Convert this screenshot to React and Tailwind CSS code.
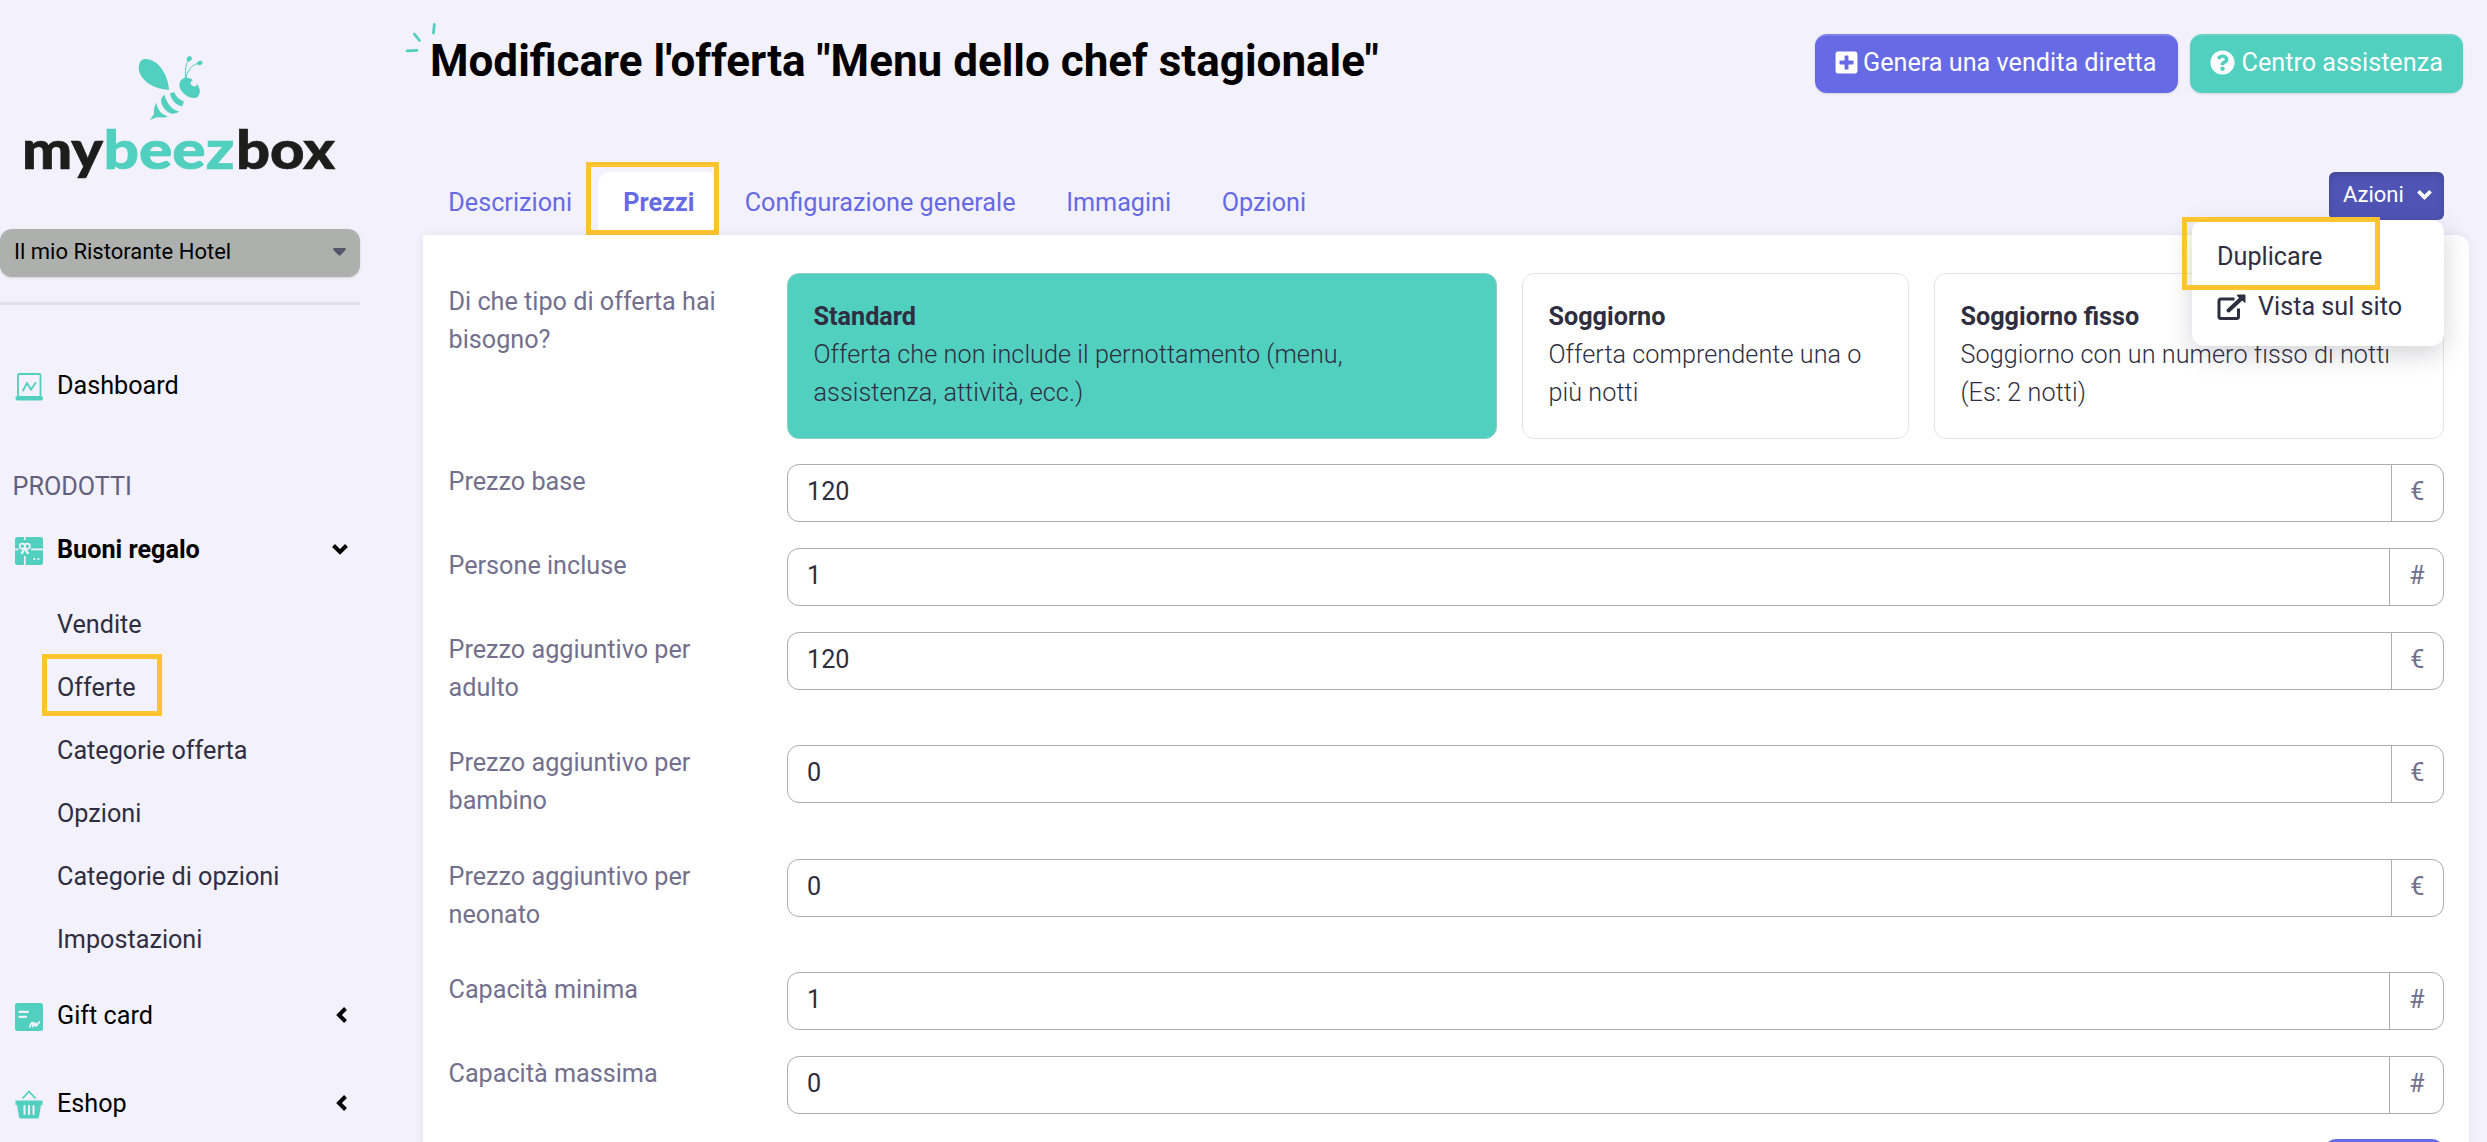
import React from 'react'
import { FaPlusSquare, FaQuestionCircle } from 'react-icons/fa'

const tabs = ['Descrizioni', 'Prezzi', 'Configurazione generale', 'Immagini', 'Opzioni']

const giftLinks = ['Vendite', 'Offerte', 'Categorie offerta', 'Opzioni', 'Categorie di opzioni', 'Impostazioni']

const offerTypes = [
  { title: 'Standard', text: 'Offerta che non include il pernottamento (menu, assistenza, attività, ecc.)', style: 'w-[710px] pr-20 bg-[#51cfbf] border-[#8fcfca]' },
  { title: 'Soggiorno', text: 'Offerta comprendente una o più notti', style: 'w-[387px] pr-6 bg-white border-[#e4e3ed]' },
  { title: 'Soggiorno fisso', text: 'Soggiorno con un numero fisso di notti (Es: 2 notti)', style: 'w-[510px] pr-6 bg-white border-[#e4e3ed]' },
]

const fields = [
  { label: 'Prezzo base', value: '120', unit: '€' },
  { label: 'Persone incluse', value: '1', unit: '#' },
  { label: 'Prezzo aggiuntivo per adulto', value: '120', unit: '€', tall: true },
  { label: 'Prezzo aggiuntivo per bambino', value: '0', unit: '€', tall: true },
  { label: 'Prezzo aggiuntivo per neonato', value: '0', unit: '€', tall: true },
  { label: 'Capacità minima', value: '1', unit: '#' },
  { label: 'Capacità massima', value: '0', unit: '#' },
]

const Logo = () => (
  <svg width="360" height="229" viewBox="0 0 360 229" className="block shrink-0">
    <g fill="#51cfbf">
      <path d="M169 90 C168 76 160 60 145.500 59 C139 59 137.500 67 139.500 72.500 C143 82 154 89 169 90Z" />
      <path d="M184 78 C179 80 178 86 181.500 91 C186 97 194 100 198 96.500 C201 93 200 87.500 197 84 C197 87 192 87.500 190.800 84 C190 82 191.500 80.500 193 80.300 C190 78 187 77 184 78Z" />
      <path d="M170 93.500 L174 92 C176 97 180 100 184 101.500 L182 106.500 C176 105 171 100 170 93.500Z" />
      <path d="M164.500 94.500 C167 104 172 110 179 111.500 C176 114 171 114.500 168 112 C163 108.500 160 102 161.500 98Z" />
      <path d="M156.500 102.500 C157 109 161 114.500 168 116.500 C163 118.500 159 116.500 156 117.500 L150 120 L154 114 C153.500 110 154.500 106 156.500 102.500Z" />
      <ellipse cx="189.300" cy="58.800" rx="2.800" ry="2.300" transform="rotate(-50 189.300 58.800)" />
      <ellipse cx="199.800" cy="63" rx="2.800" ry="2.100" transform="rotate(-15 199.800 63)" />
    </g>
    <path d="M185.500 78 C185 69 186 63 189 59.500 M185.800 78 C188 69 193 64 199 63.300" fill="none" stroke="#51cfbf" strokeWidth="1" />
    <g fontFamily="Lato, sans-serif" fontWeight="900" fontSize="53" fill="#1d1d1b" stroke="#1d1d1b" strokeWidth="0.700">
      <text x="22" y="168.700" textLength="81" lengthAdjust="spacingAndGlyphs">my</text>
      <text x="103.500" y="168.700" textLength="131" lengthAdjust="spacingAndGlyphs" fill="#51cfbf" stroke="#51cfbf">beez</text>
      <text x="236" y="168.700" textLength="99" lengthAdjust="spacingAndGlyphs">box</text>
    </g>
  </svg>
)

const DashboardIcon = () => (
  <svg width="28" height="30" viewBox="0 0 28 30" fill="none" stroke="#51cfbf">
    <rect x="3" y="2" width="22.500" height="23" rx="1.500" strokeWidth="1.800" />
    <path d="M8 18.500 L12 11 L16 17.500 L20.500 11" strokeWidth="1.800" strokeLinecap="round" />
    <path d="M0.500 24.500 H11.500 L12.500 26 H16 L17 24.500 H28 V26.500 Q28 28.500 26 28.500 H2.500 Q0.500 28.500 0.500 26.500Z" fill="#51cfbf" stroke="none" />
  </svg>
)

const VoucherIcon = () => (
  <svg width="28" height="28" viewBox="0 0 28 28">
    <rect width="28" height="28" rx="2.500" fill="#51cfbf" />
    <g fill="none" stroke="#f3f1fb" strokeWidth="1.700">
      <path d="M9.800 0 V3 M9.800 19 V28 M0 12.300 H3.500 M16 12.300 H28" />
      <circle cx="7.300" cy="9.300" r="2.600" />
      <circle cx="12.300" cy="9.300" r="2.600" />
      <path d="M9.800 11 L6.500 17 M9.800 11 L13.200 17" strokeWidth="2.400" />
      <path d="M18.500 22 H20.300 M22.500 22 H24.300" strokeWidth="2" />
    </g>
  </svg>
)

const CardIcon = () => (
  <svg width="28" height="28" viewBox="0 0 28 28">
    <rect width="28" height="28" rx="2.500" fill="#51cfbf" />
    <g fill="none" stroke="#f3f1fb" strokeWidth="2.200" strokeLinecap="round" strokeLinejoin="round">
      <path d="M4.500 8.800 H13 M4.500 13.800 H11" />
      <path d="M15 24 C15.500 20 18 18.500 18.200 20.500 L17.800 23.500 L20.500 20 L21 23 L24.500 19" strokeWidth="1.800" />
    </g>
  </svg>
)

const BasketIcon = () => (
  <svg width="28" height="29" viewBox="0 0 28 29">
    <path d="M7.500 8.500 L14 1.500 L20.500 8.500" fill="none" stroke="#51cfbf" strokeWidth="1.800" />
    <path d="M0.500 10.500 H27.500 V15 H26 L24 27 Q23.800 28.500 22 28.500 H6 Q4.200 28.500 4 27 L2 15 H0.500Z" fill="#51cfbf" />
    <path d="M9.500 16 V24 M14 16 V24 M18.500 16 V24" stroke="#f3f1fb" strokeWidth="2" strokeLinecap="round" />
  </svg>
)

const OpenIcon = () => (
  <svg width="30" height="27" viewBox="0 0 30 27" fill="none" stroke="#2f2e41" strokeWidth="3">
    <path d="M17.500 5 H4 Q2 5 2 7 V22.500 Q2 24.500 4 24.500 H19.500 Q21.500 24.500 21.500 22.500 V14.500" />
    <path d="M11.500 16.500 L25 4" strokeWidth="4" strokeLinecap="round" />
    <path d="M20 1.500 Q20 0.500 21 0.500 H27.500 Q28.500 0.500 28.500 1.500 V8 Q28.500 9.500 27.500 8.500 L20.500 2.500Z" fill="#2f2e41" stroke="none" />
  </svg>
)

const ChevronDown = ({ size }) => (
  <svg width={size} height={size} viewBox="0 0 16 16" fill="none" stroke="currentColor" strokeWidth="4">
    <path d="M1.500 4.500 L8 11 L14.500 4.500" />
  </svg>
)

const ChevronLeft = () => (
  <svg width="16" height="16" viewBox="0 0 16 16" fill="none" stroke="currentColor" strokeWidth="4">
    <path d="M13.500 1.500 L7 8 L13.500 14.500" />
  </svg>
)

const MenuItem = ({ icon, label, bold, open }) => (
  <div className="flex h-[38px] items-center pl-[15px] pr-3 text-black">
    <span className="w-[42px] pt-[3px]">{icon}</span>
    <span className={bold ? 'flex-1 pt-[2px] font-bold' : 'flex-1 pt-[2px]'}>{label}</span>
    {open === true && <ChevronDown size={16} />}
    {open === false && <ChevronLeft />}
  </div>
)

const Sidebar = () => (
  <aside className="flex w-[360px] shrink-0 flex-col">
    <Logo />
    <div className="flex h-12 shrink-0 items-center justify-between rounded-xl bg-[#aeb0ad] pl-[14px] pr-[14px] pb-[3px] text-[22px] text-black shadow-sm">
      <span>Il mio Ristorante Hotel</span>
      <svg width="13" height="8" viewBox="0 0 13 8"><path d="M1 0 H12 Q13.500 0.500 12.500 2 L7.500 7.200 Q6.500 8 5.500 7.200 L0.500 2 Q-0.500 0.500 1 0Z" fill="#56556b" /></svg>
    </div>
    <hr className="mt-[25px] border-t-[3px] border-[#e0dee9]" />
    <nav className="flex flex-col pt-[61px]">
      <MenuItem icon={<DashboardIcon />} label="Dashboard" />
      <div className="mt-[63px] h-[38px] pl-[12.600px] pt-px leading-[38px] text-[#62607a]">PRODOTTI</div>
      <div className="mt-[25px]">
        <MenuItem icon={<VoucherIcon />} label="Buoni regalo" bold open={true} />
      </div>
      <ul className="mt-[25px] pl-[42px] text-[#2f2e41]">
        {giftLinks.map((link) => (
          <li
            key={link}
            className={
              link === 'Offerte'
                ? '-mt-[2px] mb-[3px] flex h-[62px] w-[120px] items-center border-[5px] border-[#ffc42e] pl-[10px] pt-[6px]'
                : 'flex h-[63px] items-center pl-[15px] pt-px'
            }
          >
            {link}
          </li>
        ))}
      </ul>
      <div className="mt-[25px]">
        <MenuItem icon={<CardIcon />} label="Gift card" open={false} />
      </div>
      <div className="mt-[50px]">
        <MenuItem icon={<BasketIcon />} label="Eshop" open={false} />
      </div>
    </nav>
  </aside>
)

const Header = () => (
  <header className="flex h-[162px] shrink-0 items-start justify-between pl-[7px] pr-[24px]">
    <h1 className="relative mt-[33px] text-[44px] leading-[56px] font-bold text-black">
      <svg className="absolute -left-[26px] -top-[12px]" width="36" height="36" viewBox="0 0 36 36" stroke="#51cfbf" strokeWidth="2.800" strokeLinecap="round">
        <path d="M3 29.800 L13 29.300 M10.300 13 L15.500 19.500 M30.300 3.500 L29.500 12" />
      </svg>
      Modificare l'offerta "Menu dello chef stagionale"
    </h1>
    <div className="mt-[34px] flex gap-3 text-white">
      <button className="flex h-[59px] w-[363px] items-center gap-[4px] rounded-xl border-t-2 border-[#7c80ec] bg-[#666ae4] pl-[19px] pb-[3px] shadow">
        <FaPlusSquare size={25} className="mb-px" />
        Genera una vendita diretta
      </button>
      <button className="flex h-[59px] w-[273px] items-center gap-[6.500px] rounded-xl border-t-2 border-[#66d5c8] bg-[#51cfbf] pl-5 pb-[3px] shadow">
        <FaQuestionCircle size={25} className="mb-px" />
        Centro assistenza
      </button>
    </div>
  </header>
)

const Actions = () => (
  <div className="relative mr-[25px] mt-[10px] h-12">
    <button className="flex h-12 w-[115px] items-center justify-between rounded-md bg-[#5054b5] pl-[14px] pr-[12px] pb-[3px] text-[22px] text-white shadow-[inset_0_3px_6px_rgba(0,0,0,0.15)]">
      Azioni
      <ChevronDown size={15} />
    </button>
    <div className="absolute right-0 top-12 z-10 h-[126px] w-[252px] rounded-xl bg-white pl-[25px] pt-[18px] text-[#2f2e41] shadow-[0_8px_26px_rgba(40,40,60,0.2)]">
      <div className="h-[50px] leading-[38px]">Duplicare</div>
      <div className="flex h-[38px] items-center gap-[11px]">
        <OpenIcon />
        Vista sul sito
      </div>
    </div>
    <div className="absolute right-[64px] top-[45px] z-20 h-[73px] w-[198px] border-[5px] border-[#ffc42e]" />
  </div>
)

const TabBar = () => (
  <div className="flex h-[73px] shrink-0 items-start justify-between">
    <ul className="flex text-[#666ae4]">
      {tabs.map((tab) =>
        tab === 'Prezzi' ? (
          <li key={tab} className="-ml-[11px] h-[73px] w-[133px] border-[5px] border-[#ffc42e] pl-[7px] pt-[5px] font-bold">
            <div className="h-full rounded-tl-xl rounded-tr-md bg-white pl-[25px] pt-[12px] leading-[38px]">{tab}</div>
          </li>
        ) : (
          <li key={tab} className="px-[25.300px] pt-[22px] leading-[38px]">{tab}</li>
        )
      )}
    </ul>
    <Actions />
  </div>
)

const Field = ({ label, value, unit, tall }) => (
  <div className={tall ? 'flex h-[113.400px] items-start' : 'flex h-[84px] items-start'}>
    <label className="-mt-px w-[338.500px] shrink-0 pr-12 text-[#73708d]">{label}</label>
    <div className="flex h-[58px] flex-1 rounded-xl border border-[#adadad] text-[#2f2e41]">
      <span className="flex-1 pl-[19px] leading-[54px]">{value}</span>
      <span className="border-l border-[#adadad] px-[18.500px] leading-[54px] text-[#73708d]">{unit}</span>
    </div>
  </div>
)

const PriceForm = () => (
  <section className="flex-1 rounded-tr-xl bg-white pl-[25.500px] pr-[25px] pt-[38px] shadow-[0_0_8px_rgba(60,50,120,0.08)]">
    <div className="flex h-[191px] items-start">
      <div className="w-[338.500px] shrink-0 pr-14 pt-[10px] text-[#73708d]">Di che tipo di offerta hai bisogno?</div>
      <div className="flex flex-1 justify-between text-[#2f2e41]">
        {offerTypes.map((type) => (
          <div key={type.title} className={`h-[166px] rounded-xl border pl-[25.500px] pt-6 ${type.style}`}>
            <div className="font-bold">{type.title}</div>
            <div className="font-light tracking-[0.060px]">{type.text}</div>
          </div>
        ))}
      </div>
    </div>
    {fields.map((field) => (
      <Field key={field.label} {...field} />
    ))}
    <div className="flex justify-end">
      <button className="-mt-px h-[59px] w-[120px] rounded-xl bg-[#666ae4]" />
    </div>
  </section>
)

const App = () => {
  return (
    <div className="flex h-[1142px] w-[2487px] overflow-hidden bg-[#f3f1fb] font-[Roboto,sans-serif] text-[25.200px] leading-[37.800px]">
      <Sidebar />
      <main className="ml-[63px] flex flex-1 flex-col">
        <Header />
        <div className="mr-[18px] flex flex-1 flex-col">
          <TabBar />
          <PriceForm />
        </div>
      </main>
    </div>
  )
}

export default App
